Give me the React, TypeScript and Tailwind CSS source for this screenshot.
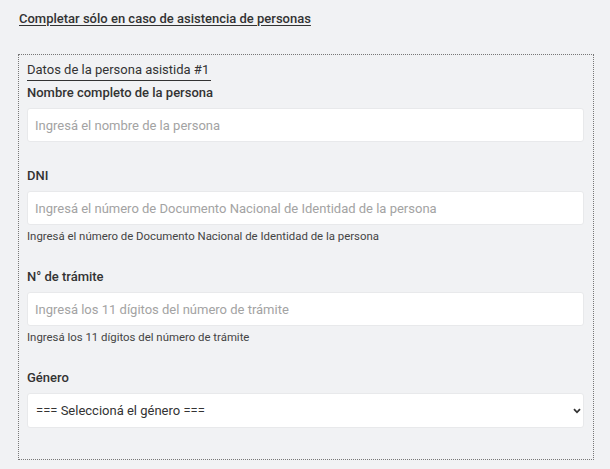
import React from "react";

function Field({
  label,
  placeholder,
  help,
  mb,
}: {
  label: string;
  placeholder: string;
  help?: string;
  mb: string;
}) {
  return (
    <div className={mb}>
      <div className="text-[13px] leading-[20px] font-medium text-[#333] mb-[5px]">{label}</div>
      <input
        className="block w-full h-[34px] bg-white border border-[#e8e9eb] rounded-[3px] px-[7px] text-[13px] text-[#333] placeholder:text-[#a3a3a3] outline-none"
        placeholder={placeholder}
      />
      {help && (
        <div className="mt-[3px] text-[11.4px] leading-[16px] text-[#444]">{help}</div>
      )}
    </div>
  );
}

export default function App() {
  return (
    <div
      className="w-[610px] h-[469px] bg-[#f1f2f4] pt-[10px] pl-[18px] pr-[16px]"
      style={{ fontFamily: "Roboto, 'Noto Sans', sans-serif" }}
    >
      <div className="pl-[1px] text-[13px] leading-[18px] font-medium text-[#333] underline underline-offset-2">
        Completar sólo en caso de asistencia de personas
      </div>
      <div className="mt-[26px] border border-dotted border-[#777] pl-[8px] pr-[9px] pt-[6px] pb-[31px]">
        <div className="w-fit text-[13px] leading-[17px] text-[#333] border-b border-[#333] pb-[2px] pr-[2px] mb-[2px]">
          Datos de la persona asistida #1
        </div>
        <Field
          mb="mb-[24px]"
          label="Nombre completo de la persona"
          placeholder="Ingresá el nombre de la persona"
        />
        <Field
          mb="mb-[23px]"
          label="DNI"
          placeholder="Ingresá el número de Documento Nacional de Identidad de la persona"
          help="Ingresá el número de Documento Nacional de Identidad de la persona"
        />
        <Field
          mb="mb-[23px]"
          label="N° de trámite"
          placeholder="Ingresá los 11 dígitos del número de trámite"
          help="Ingresá los 11 dígitos del número de trámite"
        />
        <div>
          <div className="text-[13px] leading-[20px] font-medium text-[#333] mb-[5px]">Género</div>
          <div className="relative">
            <select className="block w-full h-[35px] appearance-none bg-white border border-[#e8e9eb] rounded-[3px] pl-[8px] pr-[20px] text-[13px] text-[#333] outline-none">
              <option>=== Seleccioná el género ===</option>
            </select>
            <svg
              className="absolute right-[3px] top-[15px] w-[8px] h-[6px] pointer-events-none"
              viewBox="0 0 8 6"
            >
              <path d="M1 1.2 L4 4.3 L7 1.2" fill="none" stroke="#333" strokeWidth="1.8" />
            </svg>
          </div>
        </div>
      </div>
    </div>
  );
}
